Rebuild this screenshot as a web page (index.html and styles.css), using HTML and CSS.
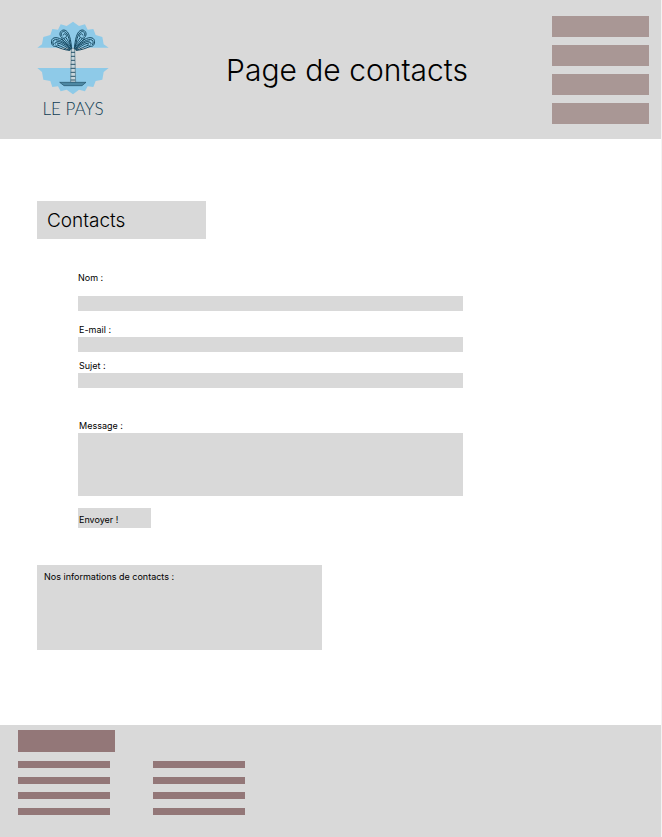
FILE: index.html
```html
<!DOCTYPE html>
<html lang="fr">
<head>
<meta charset="utf-8">
<meta name="viewport" content="width=device-width, initial-scale=1">
<title>Page de contacts</title>
<link rel="stylesheet" href="styles.css">
</head>
<body>
<header class="site-header">
  <div class="brand">
    <svg class="brand-mark" viewBox="21 18 216 222" aria-hidden="true">
      <path class="sky" d="M22 98 36 88 40 66 61 60 67 42 84 44 92 28 110 33 129 20 147 33 165 28 173 44 190 42 197 60 217 66 221 88 236 98Z"/>
      <path class="sky" d="M22 159 36 171 40 194 61 198 67 216 84 214 92 229 110 224 129 238 147 224 165 229 173 214 190 216 197 198 217 194 221 171 236 159Z"/>
      <defs>
        <g id="fronds">
          <path d="M125 104C123 76 118 46 102 45C90 45 86 59 94 67C101 73 111 68 109 61C107 54 99 56 100 61"/>
          <path d="M124 102C119 82 116 54 103 50C94 48 91 59 97 64"/>
          <path d="M123 101C112 92 105 82 95 70M124 98C115 86 109 80 101 70M124 94C117 82 113 77 108 68"/>
          <path d="M123 104C108 78 84 62 69 70C61 76 64 94 74 94C84 95 87 84 80 82C75 81 73 87 77 88"/>
          <path d="M122 103C107 84 84 69 72 75C67 79 68 88 72 90"/>
          <path d="M121 104C110 91 94 80 79 78M121 105C108 96 97 87 84 84M120 106C106 102 95 94 84 91M119 106C103 105 91 100 77 94"/>
        </g>
      </defs>
      <use class="leaf" href="#fronds"/>
      <use class="leaf" href="#fronds" transform="matrix(-1 0 0 1 258 0)"/>
      <path class="trunk" d="M124 104 122 202H137L134 104 129 98Z"/>
      <path class="rings" d="M123 112H135M123 124H135M123 136H135M122 148H136M122 160H136M122 172H136M122 184H136M122 195H136"/>
      <path class="boat" d="M89 202H168L156 212H102Z"/>
    </svg>
    <span class="brand-name">LE PAYS</span>
  </div>
  <h1 class="page-title">Page de contacts</h1>
  <nav>
    <ul class="menu"><li></li><li></li><li></li><li></li></ul>
  </nav>
</header>

<main class="content">
  <h2 class="section-title">Contacts</h2>
  <form class="contact-form">
    <div class="field field-name">
      <label for="nom">Nom :</label>
      <input id="nom" type="text">
    </div>
    <div class="field">
      <label for="email">E-mail :</label>
      <input id="email" type="email">
    </div>
    <div class="field">
      <label for="sujet">Sujet :</label>
      <input id="sujet" type="text">
    </div>
    <div class="field field-message">
      <label for="message">Message :</label>
      <textarea id="message"></textarea>
    </div>
    <button class="send" type="submit">Envoyer !</button>
  </form>
  <section class="info">
    <p>Nos informations de contacts :</p>
  </section>
</main>

<footer class="site-footer">
  <div class="footer-title"></div>
  <div class="footer-columns">
    <ul><li></li><li></li><li></li><li></li></ul>
    <ul><li></li><li></li><li></li><li></li></ul>
  </div>
</footer>
</body>
</html>
```
FILE: styles.css
```css
* {
  box-sizing: border-box;
}

body {
  display: flex;
  flex-direction: column;
  min-height: 100vh;
  margin: 0;
  border-right: 1px solid #f3f3f3;
  background: #fff;
  color: #000;
  font: 9px/12px Inter, sans-serif;
}

h1, h2, p, ul {
  margin: 0;
  padding: 0;
  font-weight: 400;
}

ul {
  list-style: none;
}

.site-header {
  display: grid;
  grid-template-columns: 105px 1fr 97px;
  padding: 16px 12px 15px 37px;
  background: #d9d9d9;
}

.brand {
  display: flex;
  flex-direction: column;
  align-items: center;
  width: 72px;
  padding-top: 5px;
}

.brand-mark {
  width: 72px;
  height: 74px;
}

.sky {
  fill: #8ecae8;
}

.leaf {
  fill: none;
  stroke: #174a63;
  stroke-width: 3;
}

.trunk {
  fill: #c9d6dc;
  stroke: #4b7283;
  stroke-width: 2;
}

.rings {
  fill: none;
  stroke: #2a566b;
  stroke-width: 3;
}

.boat {
  fill: #4d88a3;
  stroke: #204f66;
  stroke-width: 2;
}

.brand-name {
  margin-top: 4px;
  color: #0f3d54;
  font: 300 17px/20px Lato, sans-serif;
  white-space: nowrap;
}

.page-title {
  align-self: center;
  font-size: 30px;
  font-weight: 350;
  line-height: 36px;
  text-align: center;
}

.menu {
  display: grid;
  gap: 8px;
}

.menu li {
  height: 21px;
  background: #a99795;
}

.content {
  flex: 1;
  padding: 62px 37px 75px;
}

.section-title {
  width: 169px;
  padding: 8px 10px 6px;
  background: #d9d9d9;
  font-size: 19px;
  font-weight: 350;
  line-height: 24px;
}

.contact-form {
  max-width: 385px;
  margin: 33px 0 37px 41px;
}

.field {
  display: flex;
  flex-direction: column;
  gap: 1px;
  margin-bottom: 8px;
}

.field label {
  padding-left: 1px;
}

.field input,
.field textarea {
  width: 100%;
  height: 15px;
  padding: 0 4px;
  border: 0;
  border-radius: 0;
  background: #d9d9d9;
  font: inherit;
  resize: none;
}

.field-name {
  gap: 12px;
  margin-bottom: 13px;
}

.field-name label {
  padding-left: 0;
}

.field-message {
  margin: 32px 0 12px;
}

.field textarea {
  height: 63px;
}

.send {
  display: block;
  width: 73px;
  height: 20px;
  padding: 4px 1px 0;
  border: 0;
  background: #d9d9d9;
  color: #000;
  font: inherit;
  text-align: left;
}

.info {
  width: 285px;
  min-height: 85px;
  padding: 6px 7px;
  background: #d9d9d9;
}

.site-footer {
  padding: 5px 18px 22px;
  background: #d9d9d9;
}

.footer-title {
  width: 97px;
  height: 22px;
  background: #937778;
}

.footer-columns {
  display: flex;
  gap: 43px;
  margin-top: 9px;
}

.footer-columns ul {
  display: flex;
  flex-direction: column;
  justify-content: space-between;
  width: 92px;
  height: 54px;
}

.footer-columns li {
  height: 7px;
  background: #937778;
}
```
